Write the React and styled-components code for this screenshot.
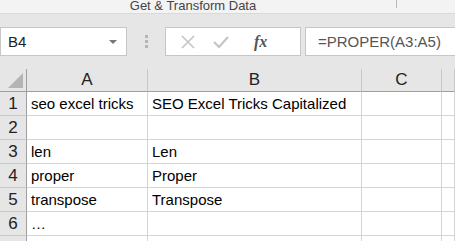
import React from 'react';
import styled, { createGlobalStyle } from 'styled-components';

const GlobalStyle = createGlobalStyle`
  html, body {
    margin: 0;
    padding: 0;
    background: #ffffff;
    overflow: hidden;
  }
  body {
    font-family: "Liberation Sans", Arial, sans-serif;
  }
`;

const Root = styled.div`
  width: 455px;
  height: 241px;
  overflow: hidden;
  background: #e6e6e6;
`;

const Ribbon = styled.div`
  height: 13px;
  background: #f3f3f3;
  border-bottom: 1px solid #dadada;
  display: flex;
  align-items: flex-end;
  overflow: hidden;
`;

const RibbonLabel = styled.div`
  width: 390px;
  text-align: center;
  font-size: 13px;
  line-height: 13px;
  color: #444;
  transform: translate(-2px, -1px);
`;

const RibbonDivider = styled.div`
  width: 1px;
  height: 8px;
  background: #b8b8b8;
  align-self: flex-start;
  margin-left: 6px;
`;

const FormulaBar = styled.div`
  display: flex;
  align-items: center;
  height: 29px;
  padding: 13px 0;
`;

const NameBox = styled.div`
  box-sizing: border-box;
  width: 127px;
  height: 29px;
  background: #fff;
  border: 1px solid #c6c6c6;
  display: flex;
  align-items: center;
  justify-content: space-between;
  padding: 0 9px 0 7px;
  font-size: 15px;
  color: #222;
`;

const Caret = styled.div`
  width: 0;
  height: 0;
  border-left: 4px solid transparent;
  border-right: 4px solid transparent;
  border-top: 4px solid #777;
`;

const Grip = styled.div`
  width: 38px;
  display: flex;
  flex-direction: column;
  align-items: center;
  gap: 2px;
  span {
    width: 3px;
    height: 3px;
    background: #b5b5b5;
  }
`;

const FxBox = styled.div`
  box-sizing: border-box;
  width: 136px;
  height: 29px;
  background: #fff;
  border: 1px solid #c6c6c6;
  display: flex;
  align-items: center;
  padding-left: 15px;
  gap: 18px;
`;

const FxText = styled.span`
  font-family: "Liberation Serif", "Times New Roman", serif;
  font-style: italic;
  font-weight: bold;
  font-size: 16px;
  color: #555;
  margin-left: 7px;
`;

const FormulaInput = styled.div`
  box-sizing: border-box;
  flex: 1;
  height: 29px;
  margin-left: 4px;
  background: #fff;
  border: 1px solid #c6c6c6;
  border-right: none;
  display: flex;
  align-items: center;
  padding-left: 12px;
  font-size: 15px;
  color: #555;
`;

const Grid = styled.div`
  display: grid;
  grid-template-columns: 27px 121px 214px 80px 1fr;
  grid-auto-rows: 24px;
  grid-template-rows: 23px;
  background: #fff;
`;

const Corner = styled.div`
  background: #e6e6e6;
  border-right: 1px solid #9f9f9f;
  border-bottom: 1px solid #9f9f9f;
  box-sizing: border-box;
  position: relative;
  &::after {
    content: '';
    position: absolute;
    right: 3px;
    bottom: 3px;
    width: 0;
    height: 0;
    border-left: 15px solid transparent;
    border-bottom: 15px solid #b4b4b4;
  }
`;

const ColHead = styled.div`
  box-sizing: border-box;
  background: #e6e6e6;
  border-right: 1px solid #c8c8c8;
  border-bottom: 1px solid #9f9f9f;
  display: flex;
  align-items: center;
  justify-content: center;
  font-size: 17px;
  color: #222;
`;

const RowHead = styled.div`
  box-sizing: border-box;
  background: #e6e6e6;
  border-right: 1px solid #9f9f9f;
  border-bottom: 1px solid #c8c8c8;
  display: flex;
  align-items: center;
  justify-content: center;
  font-size: 17px;
  color: #222;
`;

const Cell = styled.div`
  box-sizing: border-box;
  border-right: 1px solid #d4d4d4;
  border-bottom: 1px solid #d4d4d4;
  display: flex;
  align-items: center;
  padding-left: 4px;
  font-size: 15px;
  color: #000;
  white-space: nowrap;
`;

const XIcon = () => (
  <svg width="14" height="14" viewBox="0 0 14 14">
    <path d="M1 1 L13 13 M13 1 L1 13" stroke="#c4c4c4" strokeWidth="1.6" fill="none" />
  </svg>
);

const CheckIcon = () => (
  <svg width="16" height="14" viewBox="0 0 16 14">
    <path d="M1 7 L6 12 L15 2" stroke="#c4c4c4" strokeWidth="2.2" fill="none" />
  </svg>
);

const columns = ['A', 'B', 'C', ''];
const rows = [
  ['seo excel tricks', 'SEO Excel Tricks Capitalized'],
  ['', ''],
  ['len', 'Len'],
  ['proper', 'Proper'],
  ['transpose', 'Transpose'],
  ['…', ''],
];

export default function App() {
  return (
    <Root>
      <GlobalStyle />
      <Ribbon>
        <RibbonLabel>Get &amp; Transform Data</RibbonLabel>
        <RibbonDivider />
      </Ribbon>
      <FormulaBar>
        <NameBox>
          B4
          <Caret />
        </NameBox>
        <Grip>
          <span />
          <span />
          <span />
        </Grip>
        <FxBox>
          <XIcon />
          <CheckIcon />
          <FxText>fx</FxText>
        </FxBox>
        <FormulaInput>=PROPER(A3:A5)</FormulaInput>
      </FormulaBar>
      <Grid>
        <Corner />
        {columns.map((c, i) => (
          <ColHead key={i}>{c}</ColHead>
        ))}
        {rows.map((r, i) => (
          <React.Fragment key={i}>
            <RowHead>{i + 1}</RowHead>
            <Cell>{r[0]}</Cell>
            <Cell>{r[1]}</Cell>
            <Cell />
            <Cell />
          </React.Fragment>
        ))}
        <RowHead />
        <Cell />
        <Cell />
        <Cell />
        <Cell />
      </Grid>
    </Root>
  );
}
